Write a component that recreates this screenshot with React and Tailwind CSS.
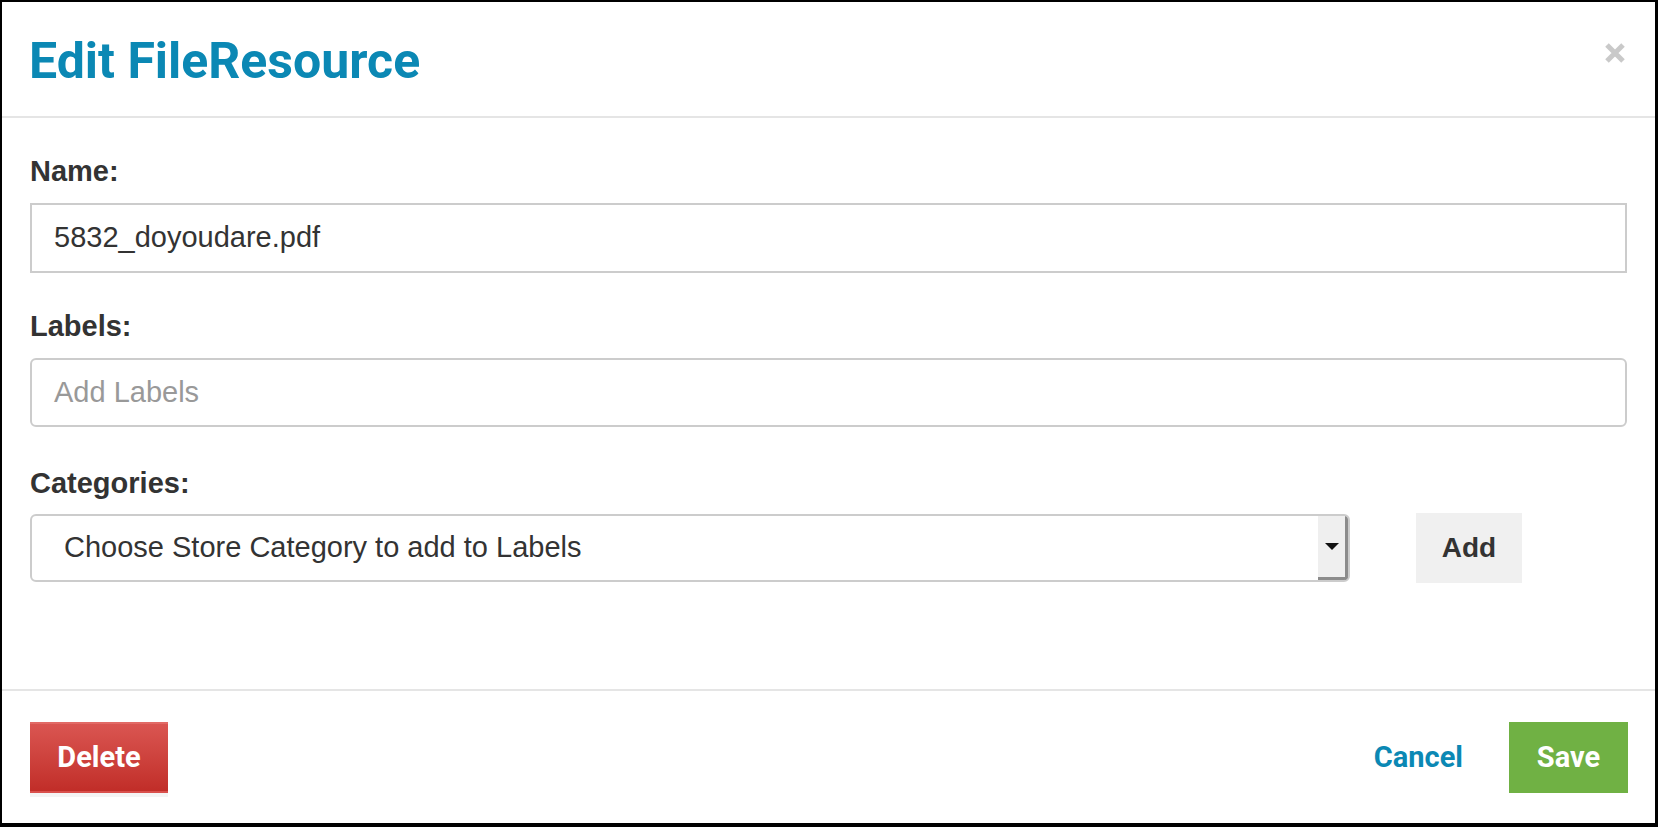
function CloseIcon() {
  return (
    <svg width="22" height="22" viewBox="0 0 22 22">
      <path d="M3 3 L19 19 M19 3 L3 19" stroke="#c9c9c9" strokeWidth="5" />
    </svg>
  )
}

function Label({ children, gap = 'mb-[15px]' }) {
  return (
    <div className={`${gap} text-[29px] leading-[34px] font-bold text-[#333]`} style={{ fontFamily: '"Liberation Sans", Arial, sans-serif' }}>
      {children}
    </div>
  )
}

export default function App() {
  const sans = { fontFamily: '"Liberation Sans", Arial, sans-serif' }
  const roboto = { fontFamily: 'Roboto, "Liberation Sans", sans-serif' }

  return (
    <div className="flex h-[827px] w-[1658px] flex-col border-t-2 border-r-[3px] border-b-4 border-l-2 border-black bg-white">
      <div className="flex h-[116px] shrink-0 items-center justify-between border-b-2 border-[#e5e5e5] pl-[27px] pr-[28px]">
        <h1 className="pt-[3px] text-[50px] leading-none font-bold text-[#0b88b4]" style={roboto}>
          Edit FileResource
        </h1>
        <button className="mr-[1px] mb-[13px] flex items-center">
          <CloseIcon />
        </button>
      </div>

      <div className="flex-1 px-[28px] pt-[36px]">
        <Label>Name:</Label>
        <div className="flex h-[70px] items-center border-2 border-[#cccccc] px-[22px] text-[29px] text-[#333]" style={sans}>
          5832_doyoudare.pdf
        </div>

        <div className="mt-[36px]">
          <Label>Labels:</Label>
          <div className="flex h-[69px] items-center rounded-[6px] border-2 border-[#cccccc] px-[22px] text-[29px] text-[#999]" style={sans}>
            Add Labels
          </div>
        </div>

        <div className="mt-[39px]">
          <Label gap="mb-[13px]">Categories:</Label>
          <div className="flex items-center gap-[66px]">
            <div className="flex h-[68px] w-[1320px] overflow-hidden rounded-[6px] border-2 border-[#cccccc]">
              <div className="flex flex-1 items-center pl-[32px] text-[29px] text-[#333]" style={sans}>
                Choose Store Category to add to Labels
              </div>
              <div className="flex w-[30px] items-center justify-center border-r-[3px] border-b-[3px] border-[#8c8c8c] bg-[#efefef]">
                <svg width="14" height="7" viewBox="0 0 14 7">
                  <path d="M0 0 L14 0 L7 7 Z" fill="#111" />
                </svg>
              </div>
            </div>
            <button className="flex h-[70px] w-[106px] items-center justify-center bg-[#f0f0f0] text-[28px] font-bold text-[#333]" style={sans}>
              Add
            </button>
          </div>
        </div>
      </div>

      <div className="flex h-[134px] shrink-0 items-start justify-between border-t-2 border-[#e5e5e5] pr-[27px] pl-[28px] pt-[31px]">
        <button
          className="flex h-[71px] w-[138px] items-center justify-center border-t-2 border-b-2 border-t-[#e26a66] border-b-[#d9504c] bg-gradient-to-b from-[#da5551] to-[#c12d28] text-[29px] font-bold text-white shadow-[0_4px_0_#f4f4f4]"
          style={roboto}
        >
          Delete
        </button>
        <div className="flex items-center gap-[46px]">
          <button className="text-[29px] font-bold text-[#0b88b4]" style={roboto}>
            Cancel
          </button>
          <button className="flex h-[71px] w-[119px] items-center justify-center bg-[#70b144] text-[29px] font-bold text-white" style={roboto}>
            Save
          </button>
        </div>
      </div>
    </div>
  )
}
